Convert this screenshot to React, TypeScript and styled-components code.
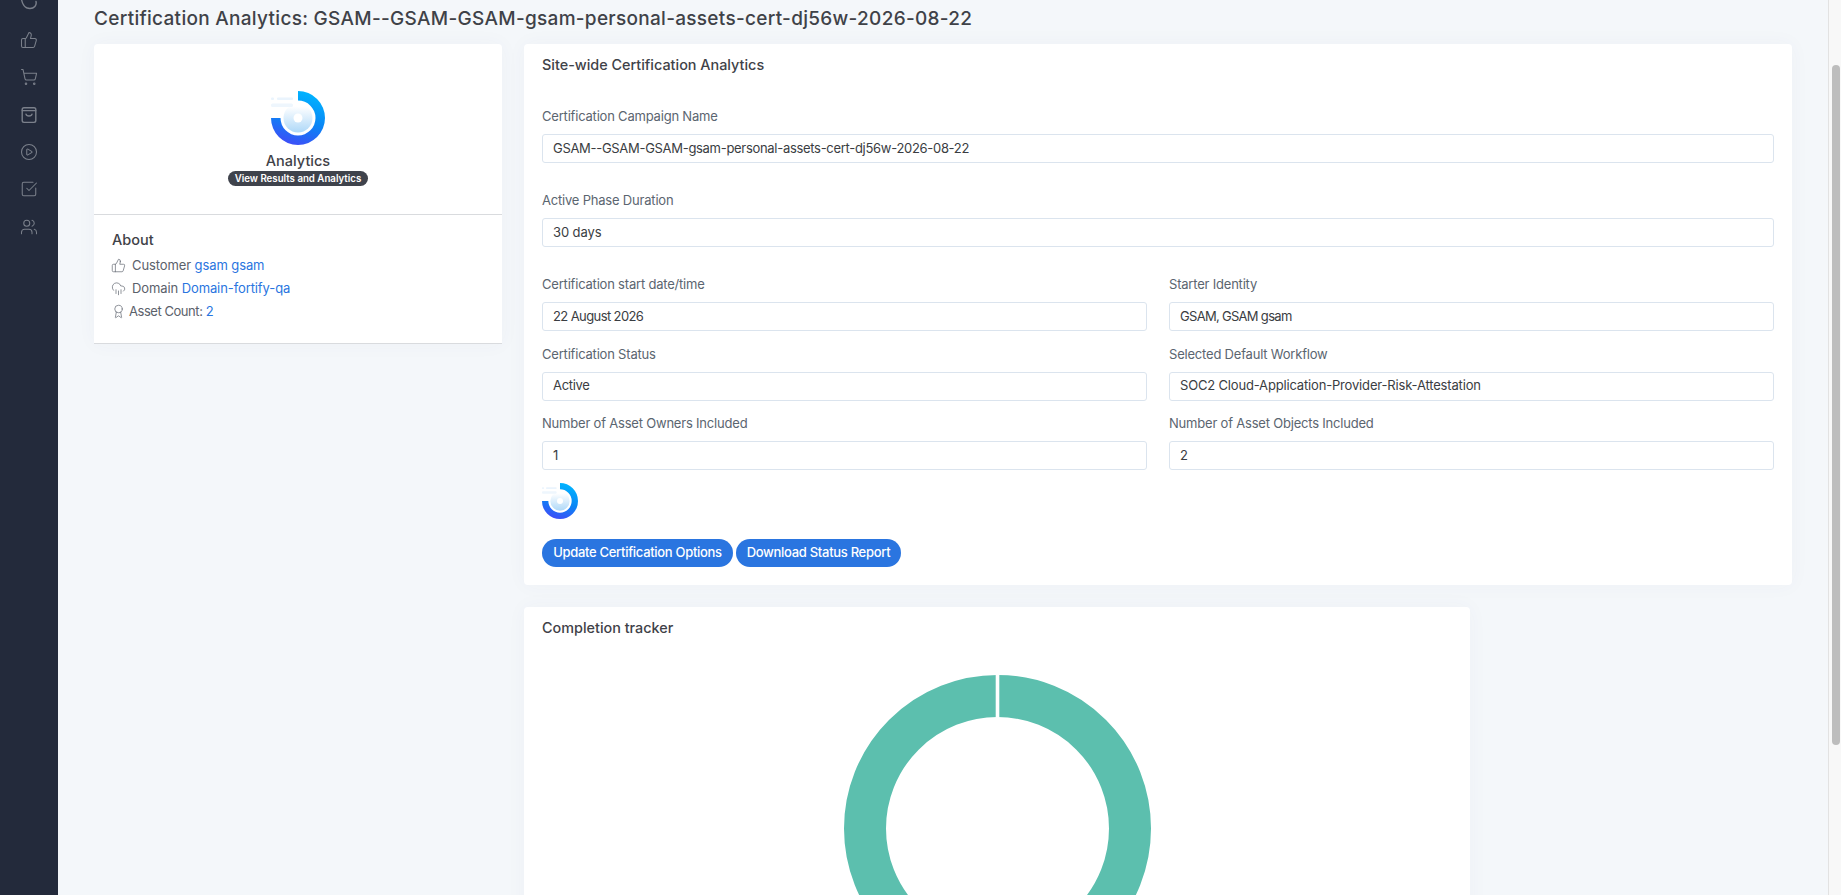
import React from "react";
import styled, { createGlobalStyle } from "styled-components";
import { ThumbsUp, ShoppingCart, CirclePlay, SquareCheckBig, Users, CloudRain, Award } from "lucide-react";

const Global = createGlobalStyle`
  html, body { margin: 0; padding: 0; height: 100%; overflow: hidden; background: #f4f7fa; }
  body { font-family: Inter, "Open Sans", "Liberation Sans", sans-serif; }
  * { box-sizing: border-box; }
`;

const Shell = styled.div`
  display: flex;
  width: 1841px;
  height: 895px;
  overflow: hidden;
`;

const Sidebar = styled.nav`
  flex: 0 0 58px;
  background: #232a3b;
  color: #7b808b;
  display: flex;
  flex-direction: column;
  align-items: center;
  gap: 19.4px;
  margin-top: -6.5px;
`;

const Main = styled.main`
  flex: 1;
  min-width: 0;
  padding: 5px 36px 0;
  overflow: hidden;
`;

const Rail = styled.div`
  flex: 0 0 13px;
  background: #f8f8f8;
  border-left: 1px solid #e2e2e2;
  padding: 65px 1px 0 3px;
`;

const Thumb = styled.div`
  height: 680px;
  background: #bdbdbd;
  border-radius: 4px;
`;

const PageTitle = styled.h1`
  margin: 0 0 11px;
  font-size: 19px;
  line-height: 28px;
  font-weight: 500;
  color: #3f4248;
  letter-spacing: 0.29px;
`;

const Columns = styled.div`
  display: grid;
  grid-template-columns: 408px 1268px;
  gap: 22px;
  align-items: start;
`;

const Card = styled.section`
  background: #fff;
  border-radius: 4px;
  box-shadow: 0 0 20px rgba(76, 87, 125, 0.04);
`;

const AboutCard = styled(Card)`
  border-bottom: 1px solid #d9dbde;
  border-radius: 4px 4px 0 0;
`;

const Hero = styled.div`
  display: flex;
  flex-direction: column;
  align-items: center;
  padding: 47px 0 28px;
  border-bottom: 1px solid #d9dbde;
`;

const HeroName = styled.div`
  margin-top: 5px;
  height: 21px;
  font-size: 14.5px;
  line-height: 21px;
  font-weight: 500;
  color: #3f4248;
`;

const Badge = styled.span`
  display: flex;
  align-items: center;
  justify-content: center;
  width: 140px;
  height: 15px;
  border-radius: 8px;
  background: #3f434c;
  color: #fff;
  font-size: 9.7px;
  font-weight: 600;
`;

const AboutBody = styled.div`
  padding: 15px 18px 20px;
`;

const AboutTitle = styled.h3`
  margin: 0 0 3.5px;
  font-size: 14.5px;
  line-height: 20px;
  font-weight: 500;
  color: #3f4248;
`;

const AboutRow = styled.div<{ $gap: number; $track: number }>`
  display: flex;
  align-items: center;
  gap: ${(p) => p.$gap}px;
  height: 23px;
  font-size: 13px;
  letter-spacing: ${(p) => p.$track}px;
  color: #5b616b;
  svg { flex: none; margin-left: -1px; color: #6b7079; }
`;

const RowText = styled.span`
  white-space: nowrap;
`;

const Link = styled.a`
  color: #2a75e0;
`;

const RightStack = styled.div`
  display: flex;
  flex-direction: column;
  gap: 22px;
`;

const FormCard = styled(Card)`
  padding: 11px 18px 18px;
`;

const CardTitle = styled.h3`
  margin: 0;
  font-size: 14.4px;
  line-height: 20px;
  font-weight: 500;
  color: #3f4248;
`;

const FormTitle = styled(CardTitle)`
  margin-bottom: 32px;
`;

const Field = styled.div<{ $after?: number }>`
  margin-bottom: ${(p) => p.$after ?? 0}px;
`;

const Label = styled.label`
  display: block;
  margin-bottom: 8px;
  font-size: 13px;
  line-height: 19px;
  letter-spacing: -0.2px;
  color: #5b6570;
`;

const Value = styled.div<{ $track: number }>`
  height: 29px;
  padding: 0 10px 2px;
  display: flex;
  align-items: center;
  background: #fff;
  border: 1px solid #dbe4ee;
  border-radius: 3px;
  font-size: 13px;
  letter-spacing: ${(p) => p.$track}px;
  color: #3a3d42;
`;

const FieldGrid = styled.div`
  display: grid;
  grid-template-columns: 605px 605px;
  column-gap: 22px;
  row-gap: 13.5px;
`;

const LogoRow = styled.div`
  margin: 13px 0 20px;
  height: 36px;
  svg { display: block; }
`;

const Buttons = styled.div`
  display: flex;
  gap: 3px;
`;

const PillButton = styled.button<{ $width: number }>`
  width: ${(p) => p.$width}px;
  height: 28px;
  padding: 0 0 2px;
  border: 0;
  border-radius: 14px;
  background: #2a75e0;
  color: #fff;
  font: 500 13px Inter, sans-serif;
  letter-spacing: -0.3px;
`;

const TrackerCard = styled(Card)`
  width: 946px;
  height: 400px;
  padding: 11px 18px 0;
`;

const DonutWrap = styled.div`
  display: flex;
  justify-content: center;
  margin-top: 37px;
  svg { display: block; }
`;

const Logo = ({ size, id }: { size: number; id: string }) => (
  <svg width={size} height={size} viewBox="0 0 54 54">
    <defs>
      <linearGradient id={`${id}a`} x1="0.7" y1="0" x2="0.4" y2="1">
        <stop offset="0" stopColor="#00b6ff" />
        <stop offset="0.55" stopColor="#0a85f5" />
        <stop offset="1" stopColor="#3d4ef7" />
      </linearGradient>
      <linearGradient id={`${id}b`} x1="0" y1="0" x2="0" y2="1">
        <stop offset="0.1" stopColor="#ffffff" />
        <stop offset="1" stopColor="#aed8f8" />
      </linearGradient>
    </defs>
    <path d="M27 0A27 27 0 1 1 0 27H9.5A17.5 17.5 0 1 0 27 9.5Z" fill={`url(#${id}a)`} />
    <circle cx="27" cy="27" r="14.5" fill={`url(#${id}b)`} />
    <circle cx="27" cy="27" r="4.5" fill="#fff" />
    <rect x="0" y="6.5" width="3" height="2.5" rx="1" fill="#eaf4fd" />
    <rect x="6" y="6.5" width="16" height="2.5" rx="1" fill="#eaf4fd" />
    <rect x="0" y="12.5" width="22" height="3.5" rx="1.5" fill="#eef6fd" />
  </svg>
);

const TopGlyph = () => (
  <svg width="18" height="18" viewBox="0 0 18 18" fill="none" stroke="currentColor" strokeWidth="1.4" strokeLinecap="round">
    <path d="M1.2 2C1.5 10 5 14.5 10 14.5C14 14.5 17 11.5 16 7.5" />
  </svg>
);

const BagGlyph = () => (
  <svg width="18" height="18" viewBox="0 0 18 18" fill="none" stroke="currentColor" strokeWidth="1.4" strokeLinecap="round" strokeLinejoin="round">
    <rect x="2.2" y="1.8" width="13.6" height="14.6" rx="1.8" />
    <path d="M2.2 4.6H15.8" />
    <path d="M6 8.2C6.5 10.6 11.5 10.6 12 8.2" />
  </svg>
);

const Donut = () => (
  <svg width="307" height="307" viewBox="0 0 307 307">
    <circle cx="153.5" cy="153.5" r="132.5" fill="none" stroke="#5cbfae" strokeWidth="42" />
    <rect x="151.7" y="0" width="3.6" height="43" fill="#fff" />
  </svg>
);

const top = [
  { label: "Certification Campaign Name", value: "GSAM--GSAM-GSAM-gsam-personal-assets-cert-dj56w-2026-08-22", track: -0.3 },
  { label: "Active Phase Duration", value: "30 days", track: -0.1 },
];

const grid = [
  { label: "Certification start date/time", value: "22 August 2026", track: -0.6 },
  { label: "Starter Identity", value: "GSAM, GSAM gsam", track: -0.7 },
  { label: "Certification Status", value: "Active", track: -0.3 },
  { label: "Selected Default Workflow", value: "SOC2 Cloud-Application-Provider-Risk-Attestation", track: -0.17 },
  { label: "Number of Asset Owners Included", value: "1", track: 0 },
  { label: "Number of Asset Objects Included", value: "2", track: 0 },
];

export default function App() {
  return (
    <Shell>
      <Global />
      <Sidebar>
        <TopGlyph />
        <ThumbsUp size={18} strokeWidth={1.4} />
        <ShoppingCart size={18} strokeWidth={1.4} />
        <BagGlyph />
        <CirclePlay size={18} strokeWidth={1.4} />
        <SquareCheckBig size={18} strokeWidth={1.4} />
        <Users size={18} strokeWidth={1.4} />
      </Sidebar>
      <Main>
        <PageTitle>Certification Analytics: GSAM--GSAM-GSAM-gsam-personal-assets-cert-dj56w-2026-08-22</PageTitle>
        <Columns>
          <AboutCard>
            <Hero>
              <Logo size={54} id="hero" />
              <HeroName>Analytics</HeroName>
              <Badge>View Results and Analytics</Badge>
            </Hero>
            <AboutBody>
              <AboutTitle>About</AboutTitle>
              <AboutRow $gap={6} $track={-0.1}>
                <ThumbsUp size={15} strokeWidth={1.2} />
                <RowText>Customer <Link>gsam gsam</Link></RowText>
              </AboutRow>
              <AboutRow $gap={6} $track={-0.1}>
                <CloudRain size={15} strokeWidth={1.2} />
                <RowText>Domain <Link>Domain-fortify-qa</Link></RowText>
              </AboutRow>
              <AboutRow $gap={3} $track={-0.45}>
                <Award size={15} strokeWidth={1.2} />
                <RowText>Asset Count: <Link>2</Link></RowText>
              </AboutRow>
            </AboutBody>
          </AboutCard>
          <RightStack>
            <FormCard>
              <FormTitle>Site-wide Certification Analytics</FormTitle>
              {top.map((f) => (
                <Field key={f.label} $after={28}>
                  <Label>{f.label}</Label>
                  <Value $track={f.track}>{f.value}</Value>
                </Field>
              ))}
              <FieldGrid>
                {grid.map((f) => (
                  <Field key={f.label}>
                    <Label>{f.label}</Label>
                    <Value $track={f.track}>{f.value}</Value>
                  </Field>
                ))}
              </FieldGrid>
              <LogoRow>
                <Logo size={36} id="small" />
              </LogoRow>
              <Buttons>
                <PillButton $width={191}>Update Certification Options</PillButton>
                <PillButton $width={165}>Download Status Report</PillButton>
              </Buttons>
            </FormCard>
            <TrackerCard>
              <CardTitle>Completion tracker</CardTitle>
              <DonutWrap>
                <Donut />
              </DonutWrap>
            </TrackerCard>
          </RightStack>
        </Columns>
      </Main>
      <Rail>
        <Thumb />
      </Rail>
    </Shell>
  );
}
